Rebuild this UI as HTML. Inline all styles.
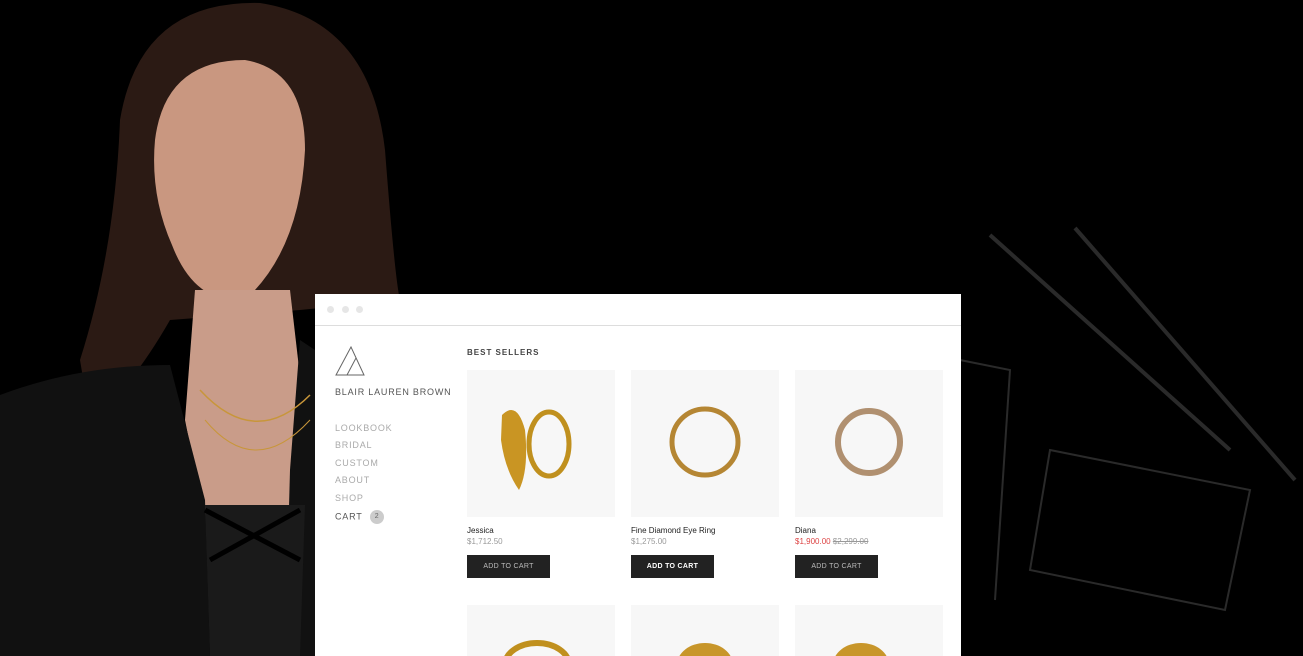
<!DOCTYPE html>
<html><head><meta charset="utf-8"><style>
body{margin:0;width:1303px;height:656px;background:#000;overflow:hidden;position:relative;font-family:"Liberation Sans",sans-serif}
.win{position:absolute;left:315px;top:294px;width:646px;height:362px;background:#fff;overflow:hidden}
.bar{height:31px;border-bottom:1px solid #ddd;position:relative}
.dot{position:absolute;top:12px;width:7px;height:7px;border-radius:50%;background:#e6e6e6}
.nav{position:absolute;left:20px;font-size:9px;letter-spacing:.8px;color:#aaa}
.card{position:absolute;width:148px;height:147px;background:#f7f7f7;top:76px}
.name{position:absolute;font-size:8px;color:#222;top:232px}
.price{position:absolute;font-size:8px;color:#999;top:243px}
.btn{position:absolute;top:261px;width:83px;height:23px;background:#222;color:#bbb;font-size:7px;text-align:center;line-height:23px;letter-spacing:.3px}
.card2{position:absolute;width:148px;height:60px;background:#f7f7f7;top:311px}
</style></head><body>
<svg width="1303" height="656" style="position:absolute;left:0;top:0">
<g stroke="#2a2a2a" fill="none" stroke-width="4">
<path d="M990 235 L1230 450"/><path d="M1075 228 L1295 480"/>
<path d="M1050 450 L1250 490 L1225 610 L1030 570 Z" stroke-width="2"/>
<path d="M960 360 L1010 370 L995 600" stroke-width="2"/>
</g>
<path d="M120 120 Q140 0 260 3 Q370 20 385 150 Q395 280 400 300 L300 310 L170 320 Q130 390 90 420 L80 360 Q115 250 120 120Z" fill="#2b1a14"/>
<path d="M155 140 Q165 60 245 60 Q305 70 305 150 Q300 250 245 300 Q195 305 172 245 Q150 195 155 140Z" fill="#c99780"/>
<path d="M195 290 L290 290 L305 420 L300 520 L205 520 L185 420Z" fill="#c99c89"/>
<path d="M0 395 Q80 365 170 365 L205 500 L210 656 L0 656Z" fill="#111"/>
<path d="M300 340 L315 350 L315 656 L285 656 L290 470Z" fill="#111"/>
<path d="M205 505 L305 505 L300 656 L210 656Z" fill="#1a1a1a"/>
<path d="M205 510 L300 560 M300 510 L210 560" stroke="#000" stroke-width="5"/>
<path d="M200 390 Q255 450 310 395" stroke="#c8963a" stroke-width="1.5" fill="none"/>
<path d="M205 420 Q255 480 310 420" stroke="#c8963a" stroke-width="1" fill="none"/>
</svg>
<div class="win">
<div class="bar"><div class="dot" style="left:12px"></div><div class="dot" style="left:27px"></div><div class="dot" style="left:41px"></div></div>
<svg style="position:absolute;left:20px;top:52px" width="30" height="30"><path d="M16 1 L1 29 L29 29 Z M21 12 L12 29" stroke="#666" fill="none" stroke-width="1"/></svg>
<div class="nav" style="top:93px;color:#555">BLAIR LAUREN BROWN</div>
<div class="nav" style="top:129px">LOOKBOOK</div>
<div class="nav" style="top:146px">BRIDAL</div>
<div class="nav" style="top:164px">CUSTOM</div>
<div class="nav" style="top:181px">ABOUT</div>
<div class="nav" style="top:199px">SHOP</div>
<div class="nav" style="top:216px;color:#555">CART <span style="display:inline-block;width:14px;height:14px;border-radius:50%;background:#ccc;color:#666;font-size:7px;text-align:center;line-height:14px;letter-spacing:0;margin-left:4px;vertical-align:middle">2</span></div>
<div style="position:absolute;left:152px;top:54px;font-size:8px;font-weight:bold;letter-spacing:1px;color:#444">BEST SELLERS</div>
<div class="card" style="left:152px"><svg width="148" height="147"><ellipse cx="82" cy="74" rx="20" ry="32" stroke="#c0901e" stroke-width="5" fill="none"/><path d="M35 45 Q50 30 58 60 Q62 100 52 120 Q38 100 34 70Z" fill="#c99523"/></svg></div>
<div class="card" style="left:316px"><svg width="148" height="147"><circle cx="74" cy="72" r="33" stroke="#b58633" stroke-width="5" fill="none"/></svg></div>
<div class="card" style="left:480px"><svg width="148" height="147"><circle cx="74" cy="72" r="31" stroke="#b09070" stroke-width="6" fill="none"/></svg></div>
<div class="name" style="left:152px">Jessica</div><div class="price" style="left:152px">$1,712.50</div>
<div class="name" style="left:316px">Fine Diamond Eye Ring</div><div class="price" style="left:316px">$1,275.00</div>
<div class="name" style="left:480px">Diana</div><div class="price" style="left:480px"><span style="color:#d44">$1,900.00</span> <s>$2,299.00</s></div>
<div class="btn" style="left:152px">ADD TO CART</div>
<div class="btn" style="left:316px;color:#fff;font-weight:bold">ADD TO CART</div>
<div class="btn" style="left:480px">ADD TO CART</div>
<div class="card2" style="left:152px"><svg width="148" height="60"><ellipse cx="70" cy="60" rx="32" ry="22" stroke="#c0901e" stroke-width="6" fill="none"/></svg></div>
<div class="card2" style="left:316px"><svg width="148" height="60"><ellipse cx="74" cy="60" rx="28" ry="22" fill="#c8962a"/></svg></div>
<div class="card2" style="left:480px"><svg width="148" height="60"><ellipse cx="66" cy="60" rx="28" ry="22" fill="#c8962a"/></svg></div>
</div>
</body></html>
